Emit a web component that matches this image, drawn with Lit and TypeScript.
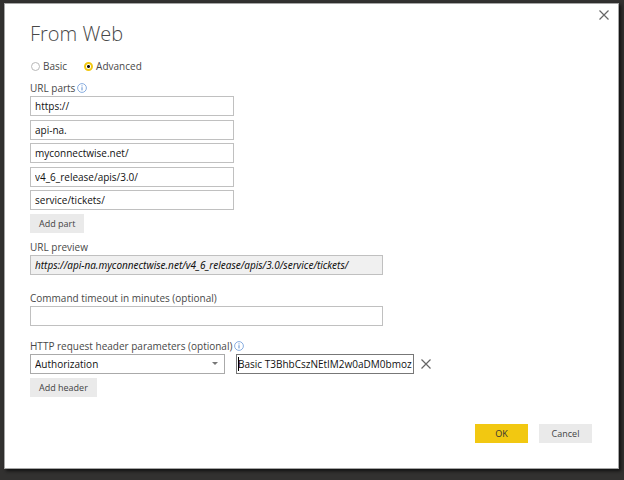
import { LitElement, html, css, svg } from "lit";
import { customElement, state } from "lit/decorators.js";

const infoIcon = html`<svg class="info" viewBox="0 0 10 10" aria-hidden="true">
  ${svg`<circle cx="5" cy="5" r="4.4" fill="none" stroke="#7ba4dc" stroke-width="0.9" />
  <rect x="4.5" y="4.2" width="1" height="3.2" fill="#5f8fd2" />
  <rect x="4.5" y="2.4" width="1" height="1" fill="#5f8fd2" />`}
</svg>`;

const crossIcon = html`<svg class="cross" viewBox="0 0 10 10" aria-hidden="true">
  ${svg`<path d="M0.5 0.5 L9.5 9.5 M9.5 0.5 L0.5 9.5" fill="none" stroke="currentColor" stroke-width="1.2" />`}
</svg>`;

@customElement("app-root")
export class AppRoot extends LitElement {
  @state() private parts = [
    "https://",
    "api-na.",
    "myconnectwise.net/",
    "v4_6_release/apis/3.0/",
    "service/tickets/",
  ];

  static styles = css`
    :host {
      display: flex;
      min-height: 100vh;
      box-sizing: border-box;
      padding: 3px 5px 11px 4px;
      background: #323130;
      color: #484848;
      font: 10px/14px "Open Sans", "Noto Sans", sans-serif;
    }
    * {
      box-sizing: border-box;
    }
    input,
    select,
    button {
      font: inherit;
      margin: 0;
      border-radius: 0;
    }
    .dialog {
      flex: 1;
      display: flex;
      flex-direction: column;
      position: relative;
      padding: 17px 26px 25px 25px;
      background: #fff;
      border: 1px solid #a6a6a6;
      box-shadow: 2px 2px 3px #111;
    }
    h1 {
      margin: 0 0 12px;
      font-size: 20px;
      line-height: 26px;
      font-weight: 300;
    }
    .modes {
      display: flex;
      gap: 16px;
      margin-bottom: 8px;
    }
    .modes label {
      display: flex;
      align-items: center;
      gap: 3px;
    }
    .modes input {
      appearance: none;
      width: 9px;
      height: 9px;
      margin: 0 0 0 1px;
      border: 1px solid #b8b8b8;
      border-radius: 50%;
    }
    .modes input:checked {
      border: 2px solid #f2c811;
      background: radial-gradient(circle, #111 0 1px, #fff 2px);
    }
    .label {
      display: flex;
      align-items: center;
      gap: 2px;
      margin-bottom: 1px;
    }
    .info {
      width: 10px;
      height: 10px;
    }
    .parts {
      display: flex;
      flex-direction: column;
      justify-content: space-between;
      min-height: 114px;
    }
    .field {
      display: block;
      width: 100%;
      height: 20px;
      padding: 0 4px;
      border: 1px solid #c0c0c0;
      background: #fff;
      color: #111;
      outline: none;
    }
    .parts .field {
      max-width: 204px;
    }
    .wide {
      max-width: 353px;
    }
    .preview {
      background: #f0f0f0;
      font-family: "Noto Sans", sans-serif;
      font-style: italic;
      margin-bottom: 16px;
    }
    .timeout {
      margin-bottom: 13px;
    }
    .button {
      align-self: flex-start;
      height: 19px;
      padding: 0 9px;
      border: 0;
      background: #eaeaea;
      color: #444;
      font-size: 9px;
    }
    .add {
      margin: 4px 0 7px;
    }
    .row {
      display: flex;
      align-items: center;
    }
    .picker {
      position: relative;
      flex: 0 1 195px;
      margin-right: 11px;
    }
    .picker select {
      appearance: none;
      border-color: #aaa;
    }
    .picker::after {
      content: "";
      position: absolute;
      right: 7px;
      top: 8px;
      border: 3px solid transparent;
      border-top-color: #777;
      border-bottom: 0;
    }
    .value {
      position: relative;
      flex: 0 1 178px;
    }
    .value .field {
      padding: 0 1px;
      border-color: #777;
    }
    .caret {
      position: absolute;
      left: 2px;
      top: 3px;
      width: 1px;
      height: 14px;
      background: #000;
    }
    .icon-button {
      display: flex;
      padding: 0;
      border: 0;
      background: none;
      color: #666;
    }
    .row .icon-button {
      margin-left: 7px;
    }
    .cross {
      width: 10px;
      height: 10px;
    }
    .close {
      position: absolute;
      top: 6px;
      right: 9px;
    }
    .actions {
      display: flex;
      justify-content: flex-end;
      gap: 11px;
      margin-top: auto;
    }
    .actions .button {
      width: 53px;
      padding: 0;
    }
    .actions .primary {
      background: #f2c811;
      color: #333;
    }
  `;

  render() {
    return html`
      <main class="dialog" role="dialog" aria-labelledby="title">
        <button class="icon-button close" aria-label="Close">${crossIcon}</button>
        <h1 id="title">From Web</h1>
        <div class="modes">
          <label><input type="radio" name="mode" />Basic</label>
          <label><input type="radio" name="mode" checked />Advanced</label>
        </div>
        <label class="label" for="part-0">URL parts ${infoIcon}</label>
        <div class="parts">
          ${this.parts.map(
            (part, i) => html`<input
              class="field"
              id="part-${i}"
              aria-label="URL part ${i + 1}"
              .value=${part}
              @input=${(e: Event) => this.edit(i, e)}
            />`
          )}
        </div>
        <button class="button add" @click=${this.addPart}>Add part</button>
        <label class="label" for="preview">URL preview</label>
        <input class="field wide preview" id="preview" readonly .value=${this.parts.join("")} />
        <label class="label" for="timeout">Command timeout in minutes (optional)</label>
        <input class="field wide timeout" id="timeout" />
        <label class="label" for="header">HTTP request header parameters (optional) ${infoIcon}</label>
        <div class="row">
          <div class="picker">
            <select class="field" id="header">
              <option>Authorization</option>
            </select>
          </div>
          <div class="value">
            <input class="field" aria-label="Header value" value="Basic T3BhbCszNEtIM2w0aDM0bmoz" />
            <span class="caret"></span>
          </div>
          <button class="icon-button" aria-label="Remove header">${crossIcon}</button>
        </div>
        <button class="button add">Add header</button>
        <div class="actions">
          <button class="button primary">OK</button>
          <button class="button">Cancel</button>
        </div>
      </main>
    `;
  }

  private edit(index: number, e: Event) {
    const value = (e.target as HTMLInputElement).value;
    this.parts = this.parts.map((p, i) => (i === index ? value : p));
  }

  private addPart() {
    this.parts = [...this.parts, ""];
  }
}
